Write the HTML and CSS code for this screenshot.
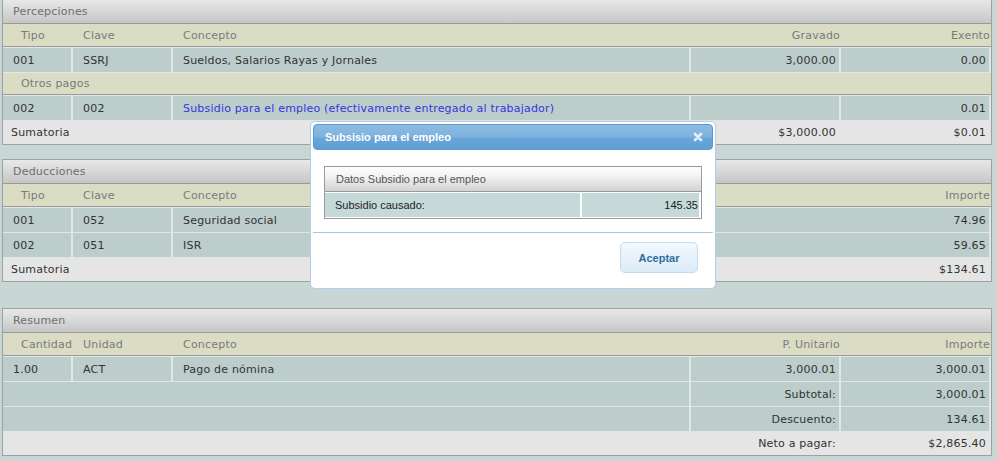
FILE: index.html
```html
<!DOCTYPE html>
<html lang="es">
<head>
    <meta charset="UTF-8">
    <title>Recibo de nómina</title>
    <link rel="stylesheet" href="styles.css">
</head>
<body>
    <div class="page">
        <!-- Percepciones -->
        <div class="panel panel-first">
            <div class="panel-head">Percepciones</div>
            <table class="grid">
                <colgroup><col class="c-tipo"><col class="c-clave"><col class="c-concepto"><col class="c-monto"><col class="c-monto"></colgroup>
                <tr><th>Tipo</th><th>Clave</th><th>Concepto</th><th class="num">Gravado</th><th class="num">Exento</th></tr>
                <tr><td>001</td><td>SSRJ</td><td>Sueldos, Salarios Rayas y Jornales</td><td class="num">3,000.00</td><td class="num">0.00</td></tr>
                <tr class="group"><td colspan="5">Otros pagos</td></tr>
                <tr><td>002</td><td>002</td><td><a href="#" class="link">Subsidio para el empleo (efectivamente entregado al trabajador)</a></td><td class="num"></td><td class="num">0.01</td></tr>
                <tr class="total"><td colspan="3">Sumatoria</td><td class="num">$3,000.00</td><td class="num">$0.01</td></tr>
            </table>
        </div>

        <!-- Deducciones -->
        <div class="panel panel-second">
            <div class="panel-head">Deducciones</div>
            <table class="grid">
                <colgroup><col class="c-tipo"><col class="c-clave"><col class="c-concepto"><col class="c-importe"></colgroup>
                <tr><th>Tipo</th><th>Clave</th><th>Concepto</th><th class="num">Importe</th></tr>
                <tr><td>001</td><td>052</td><td>Seguridad social</td><td class="num">74.96</td></tr>
                <tr><td>002</td><td>051</td><td>ISR</td><td class="num">59.65</td></tr>
                <tr class="total"><td colspan="3">Sumatoria</td><td class="num">$134.61</td></tr>
            </table>
        </div>

        <!-- Resumen -->
        <div class="panel panel-third">
            <div class="panel-head">Resumen</div>
            <table class="grid">
                <colgroup><col class="c-tipo"><col class="c-clave"><col class="c-concepto"><col class="c-monto"><col class="c-monto"></colgroup>
                <tr><th>Cantidad</th><th>Unidad</th><th>Concepto</th><th class="num">P. Unitario</th><th class="num">Importe</th></tr>
                <tr><td>1.00</td><td>ACT</td><td>Pago de nómina</td><td class="num">3,000.01</td><td class="num">3,000.01</td></tr>
                <tr><td colspan="3"></td><td class="num">Subtotal:</td><td class="num">3,000.01</td></tr>
                <tr><td colspan="3"></td><td class="num">Descuento:</td><td class="num">134.61</td></tr>
                <tr class="total"><td colspan="3"></td><td class="num">Neto a pagar:</td><td class="num">$2,865.40</td></tr>
            </table>
        </div>
    </div>

    <!-- Ventana de subsidio -->
    <div class="dialog">
        <div class="dialog-title">
            <span>Subsisio para el empleo</span>
            <svg class="dialog-close" width="10" height="10" viewBox="0 0 10 10"><path d="M2 2L8 8M8 2L2 8" stroke="#e6f0f9" stroke-width="2.6" stroke-linecap="round"/></svg>
        </div>
        <div class="dialog-body">
            <div class="sub-grid">
                <div class="sub-head">Datos Subsidio para el empleo</div>
                <div class="sub-row">
                    <div class="sub-label">Subsidio causado:</div>
                    <div class="sub-value">145.35</div>
                </div>
            </div>
        </div>
        <div class="dialog-buttons">
            <button class="btn">Aceptar</button>
        </div>
    </div>
</body>
</html>
```

FILE: styles.css
```css
body {
    margin: 0;
    background: #c9d6d6;
    font-family: "DejaVu Sans", Verdana, sans-serif;
    font-size: 11px;
    letter-spacing: 0.2px;
    color: #333;
}

.page {
    padding-left: 2px;
}

.panel {
    width: 988px;
    border: 1px solid #a0a0a0;
    background: #e0e7e7;
}

.panel-first {
    margin-top: -1px;
}

.panel-second {
    margin-top: 14px;
}

.panel-third {
    margin-top: 26px;
}

.panel-head {
    height: 22px;
    line-height: 22px;
    padding: 1px 0 0 10px;
    color: #6e6e6e;
    background: linear-gradient(#e8e8e8, #c5c7c7);
    border-bottom: 1px solid #9a9a9a;
}

.grid {
    width: 100%;
    table-layout: fixed;
    border-collapse: separate;
    border-spacing: 0;
}

.c-tipo { width: 70px; }
.c-clave { width: 100px; }
.c-concepto { width: 518px; }
.c-monto { width: 150px; }
.c-importe { width: 300px; }

.grid th {
    background: #dadcc4;
    color: #7a7a7a;
    font-weight: normal;
    text-align: left;
    line-height: 21px;
    padding: 1px 0 0 10px;
    border-bottom: 1px solid #9a9a9a;
}

.grid th:first-child {
    padding-left: 18px;
}

.grid th.num {
    text-align: right;
    padding-right: 1px;
}

.grid td {
    background: #bccdcc;
    line-height: 23px;
    padding: 1px 0 0 10px;
    border-top: 1px solid #e0e7e7;
    border-right: 2px solid #e0e7e7;
    white-space: nowrap;
    overflow: hidden;
}

.grid td.num {
    text-align: right;
    padding-right: 3px;
}

.grid .group td {
    background: #dadcc4;
    color: #7a7a7a;
    line-height: 20px;
    padding-left: 18px;
    border-right: 0;
    border-bottom: 1px solid #9a9a9a;
}

.grid .total td {
    background: #e5e5e5;
    line-height: 22px;
    padding-left: 8px;
    border-right: 0;
}

.grid .total td.num {
    padding-right: 5px;
}

.link {
    color: #3636dc;
    text-decoration: none;
}

/* dialog */
.dialog {
    position: absolute;
    left: 310px;
    top: 121px;
    width: 400px;
    padding: 2px;
    background: #fff;
    border: 1px solid #aed0ea;
    border-radius: 5px;
    font-family: "Liberation Sans", Arial, sans-serif;
    font-size: 11px;
    letter-spacing: 0;
}

.dialog-title {
    display: flex;
    justify-content: space-between;
    align-items: center;
    height: 24px;
    padding: 0 9px 0 11px;
    color: #fff;
    font-weight: bold;
    background: linear-gradient(#8dbce3, #7db1dd 50%, #6aa5d8 55%, #5f9ed5);
    border: 1px solid #5a9ad1;
    border-radius: 4px;
}

.dialog-close {
    display: block;
}

.dialog-body {
    padding: 16px 11px 13px 11px;
}

.sub-grid {
    border: 1px solid #9a9a9a;
}

.sub-head {
    height: 24px;
    line-height: 24px;
    padding-left: 11px;
    color: #555;
    background: linear-gradient(#fefefe, #f2f2f2 40%, #d2d2d2);
    border-bottom: 1px solid #9a9a9a;
}

.sub-row {
    display: flex;
    gap: 2px;
    padding: 1px 2px 1px 0;
    color: #222;
}

.sub-label {
    flex: 0 0 245px;
    line-height: 24px;
    padding-left: 10px;
    background: #c4d9d8;
}

.sub-value {
    flex: 1;
    line-height: 24px;
    text-align: right;
    padding-right: 1px;
    background: #c4d9d8;
}

.dialog-buttons {
    display: flex;
    justify-content: flex-end;
    padding: 9px 15px 13px;
    border-top: 1px solid #a6c9e2;
}

.btn {
    width: 78px;
    height: 31px;
    font-family: "Liberation Sans", Arial, sans-serif;
    font-size: 11px;
    font-weight: bold;
    color: #2e6e9e;
    background: linear-gradient(#f2f8fe, #dcebf8);
    border: 1px solid #c5dbec;
    border-radius: 5px;
}
```
